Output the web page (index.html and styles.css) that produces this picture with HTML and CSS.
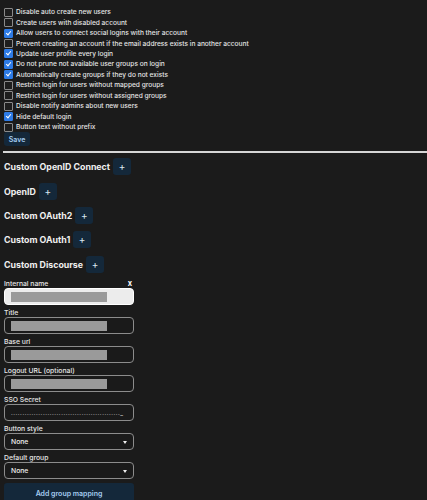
FILE: index.html
```html
<!DOCTYPE html>
<html>
  <head>
    <title>Social login settings</title>
    <link rel="stylesheet" href="styles.css">
  </head>
  <body>
    <div class="options">
      <label class="option"><span class="box"></span>Disable auto create new users</label>
      <label class="option"><span class="box"></span>Create users with disabled account</label>
      <label class="option"><span class="box checked"></span>Allow users to connect social logins with their account</label>
      <label class="option"><span class="box"></span>Prevent creating an account if the email address exists in another account</label>
      <label class="option"><span class="box checked"></span>Update user profile every login</label>
      <label class="option"><span class="box checked"></span>Do not prune not available user groups on login</label>
      <label class="option"><span class="box checked"></span>Automatically create groups if they do not exists</label>
      <label class="option"><span class="box"></span>Restrict login for users without mapped groups</label>
      <label class="option"><span class="box"></span>Restrict login for users without assigned groups</label>
      <label class="option"><span class="box"></span>Disable notify admins about new users</label>
      <label class="option"><span class="box checked"></span>Hide default login</label>
      <label class="option"><span class="box"></span>Button text without prefix</label>
    </div>

    <button class="save-button">Save</button>

    <hr class="divider">

    <div class="providers">
      <div class="provider"><h3>Custom OpenID Connect</h3><button class="add-button">+</button></div>
      <div class="provider"><h3>OpenID</h3><button class="add-button">+</button></div>
      <div class="provider"><h3>Custom OAuth2</h3><button class="add-button">+</button></div>
      <div class="provider"><h3>Custom OAuth1</h3><button class="add-button">+</button></div>
      <div class="provider"><h3>Custom Discourse</h3><button class="add-button">+</button></div>
    </div>

    <div class="form">
      <div class="field">
        <div class="field-label">Internal name <span class="remove">x</span></div>
        <div class="input light"><span class="mask"></span></div>
      </div>
      <div class="field">
        <div class="field-label">Title</div>
        <div class="input"><span class="mask"></span></div>
      </div>
      <div class="field">
        <div class="field-label">Base url</div>
        <div class="input"><span class="mask"></span></div>
      </div>
      <div class="field">
        <div class="field-label">Logout URL (optional)</div>
        <div class="input"><span class="mask"></span></div>
      </div>
      <div class="field">
        <div class="field-label">SSO Secret</div>
        <div class="input secret">................................................_</div>
      </div>
      <div class="field">
        <div class="field-label">Button style</div>
        <div class="input select">None<span class="caret"></span></div>
      </div>
      <div class="field">
        <div class="field-label">Default group</div>
        <div class="input select">None<span class="caret"></span></div>
      </div>
      <button class="mapping-button">Add group mapping</button>
    </div>
  </body>
</html>
```

FILE: styles.css
```css
body {
  margin: 0;
  padding: 0 0 0 4px;
  background-color: #1b1b1b;
  color: #e4e4e4;
  font-family: Inter, "Liberation Sans", sans-serif;
  font-size: 6.6px;
  overflow: hidden;
}

.options {
  padding-top: 7px;
}
.option {
  display: flex;
  align-items: center;
  height: 10.45px;
  white-space: nowrap;
  font-weight: 500;
}
.box {
  width: 7px;
  height: 7px;
  margin-right: 3px;
  border: 1px solid #8a8a8a;
  border-radius: 1px;
  background-color: #1e1e1e;
  position: relative;
}
.box.checked {
  border-color: #2d7be6;
  background-color: #2d7be6;
}
.box.checked::after {
  content: "";
  position: absolute;
  left: 2px;
  top: 0px;
  width: 2px;
  height: 4px;
  border: solid #fff;
  border-width: 0 1.2px 1.2px 0;
  transform: rotate(40deg);
}

.save-button {
  margin-top: 0;
  height: 14px;
  width: 26px;
  padding: 0;
  border: none;
  border-radius: 3px;
  background-color: #14283a;
  color: #a5cdf1;
  font-family: Inter, "Liberation Sans", sans-serif;
  font-size: 7px;
  font-weight: 600;
}

.divider {
  margin: 5px 0 0 -1px;
  border: none;
  height: 2px;
  background-color: #d6d6d6;
}

.providers {
  padding-top: 5px;
}
.provider {
  display: flex;
  align-items: center;
  height: 17px;
  margin-bottom: 7.4px;
}
.provider h3 {
  margin: 0 3px 0 0;
  font-size: 8.8px;
  font-weight: 700;
  color: #f0f0f0;
}
.add-button {
  width: 18px;
  height: 17px;
  padding: 0;
  border: none;
  border-radius: 3px;
  background-color: #14283a;
  color: #d8e6f2;
  font-family: Inter, "Liberation Sans", sans-serif;
  font-size: 10px;
  line-height: 17px;
}

.form {
  width: 130px;
  margin-top: -4px;
}
.field-label {
  display: flex;
  justify-content: space-between;
  height: 12px;
  padding-top: 3px;
  box-sizing: border-box;
  line-height: 9px;
  font-size: 6.8px;
  font-weight: 500;
  color: #e8e8e8;
}
.remove {
  margin-right: 2px;
  font-weight: 700;
  font-size: 7.5px;
  color: #fff;
}
.input {
  box-sizing: border-box;
  display: flex;
  align-items: center;
  height: 17px;
  padding: 0 6px;
  border: 1px solid #8c8c8c;
  border-radius: 4px;
  background-color: #1a1a1a;
  position: relative;
}
.input.light {
  border: 1.5px solid #ffffff;
  background-color: #ececec;
}
.mask {
  display: block;
  width: 96px;
  height: 10px;
  background-color: #9a9a9a;
}
.secret {
  font-size: 6px;
  letter-spacing: 0.55px;
  color: #e0e0e0;
  overflow: hidden;
  white-space: nowrap;
}
.select {
  font-size: 6.8px;
  font-weight: 500;
  color: #f0f0f0;
}
.caret {
  position: absolute;
  right: 6px;
  top: 7px;
  width: 0;
  height: 0;
  border-left: 2.5px solid transparent;
  border-right: 2.5px solid transparent;
  border-top: 3px solid #f0f0f0;
}

.mapping-button {
  display: block;
  width: 130px;
  height: 20px;
  margin-top: 4px;
  padding: 0;
  border: none;
  border-radius: 3px;
  background-color: #14283a;
  color: #a5cdf1;
  font-family: Inter, "Liberation Sans", sans-serif;
  font-size: 7px;
  font-weight: 600;
}
```
